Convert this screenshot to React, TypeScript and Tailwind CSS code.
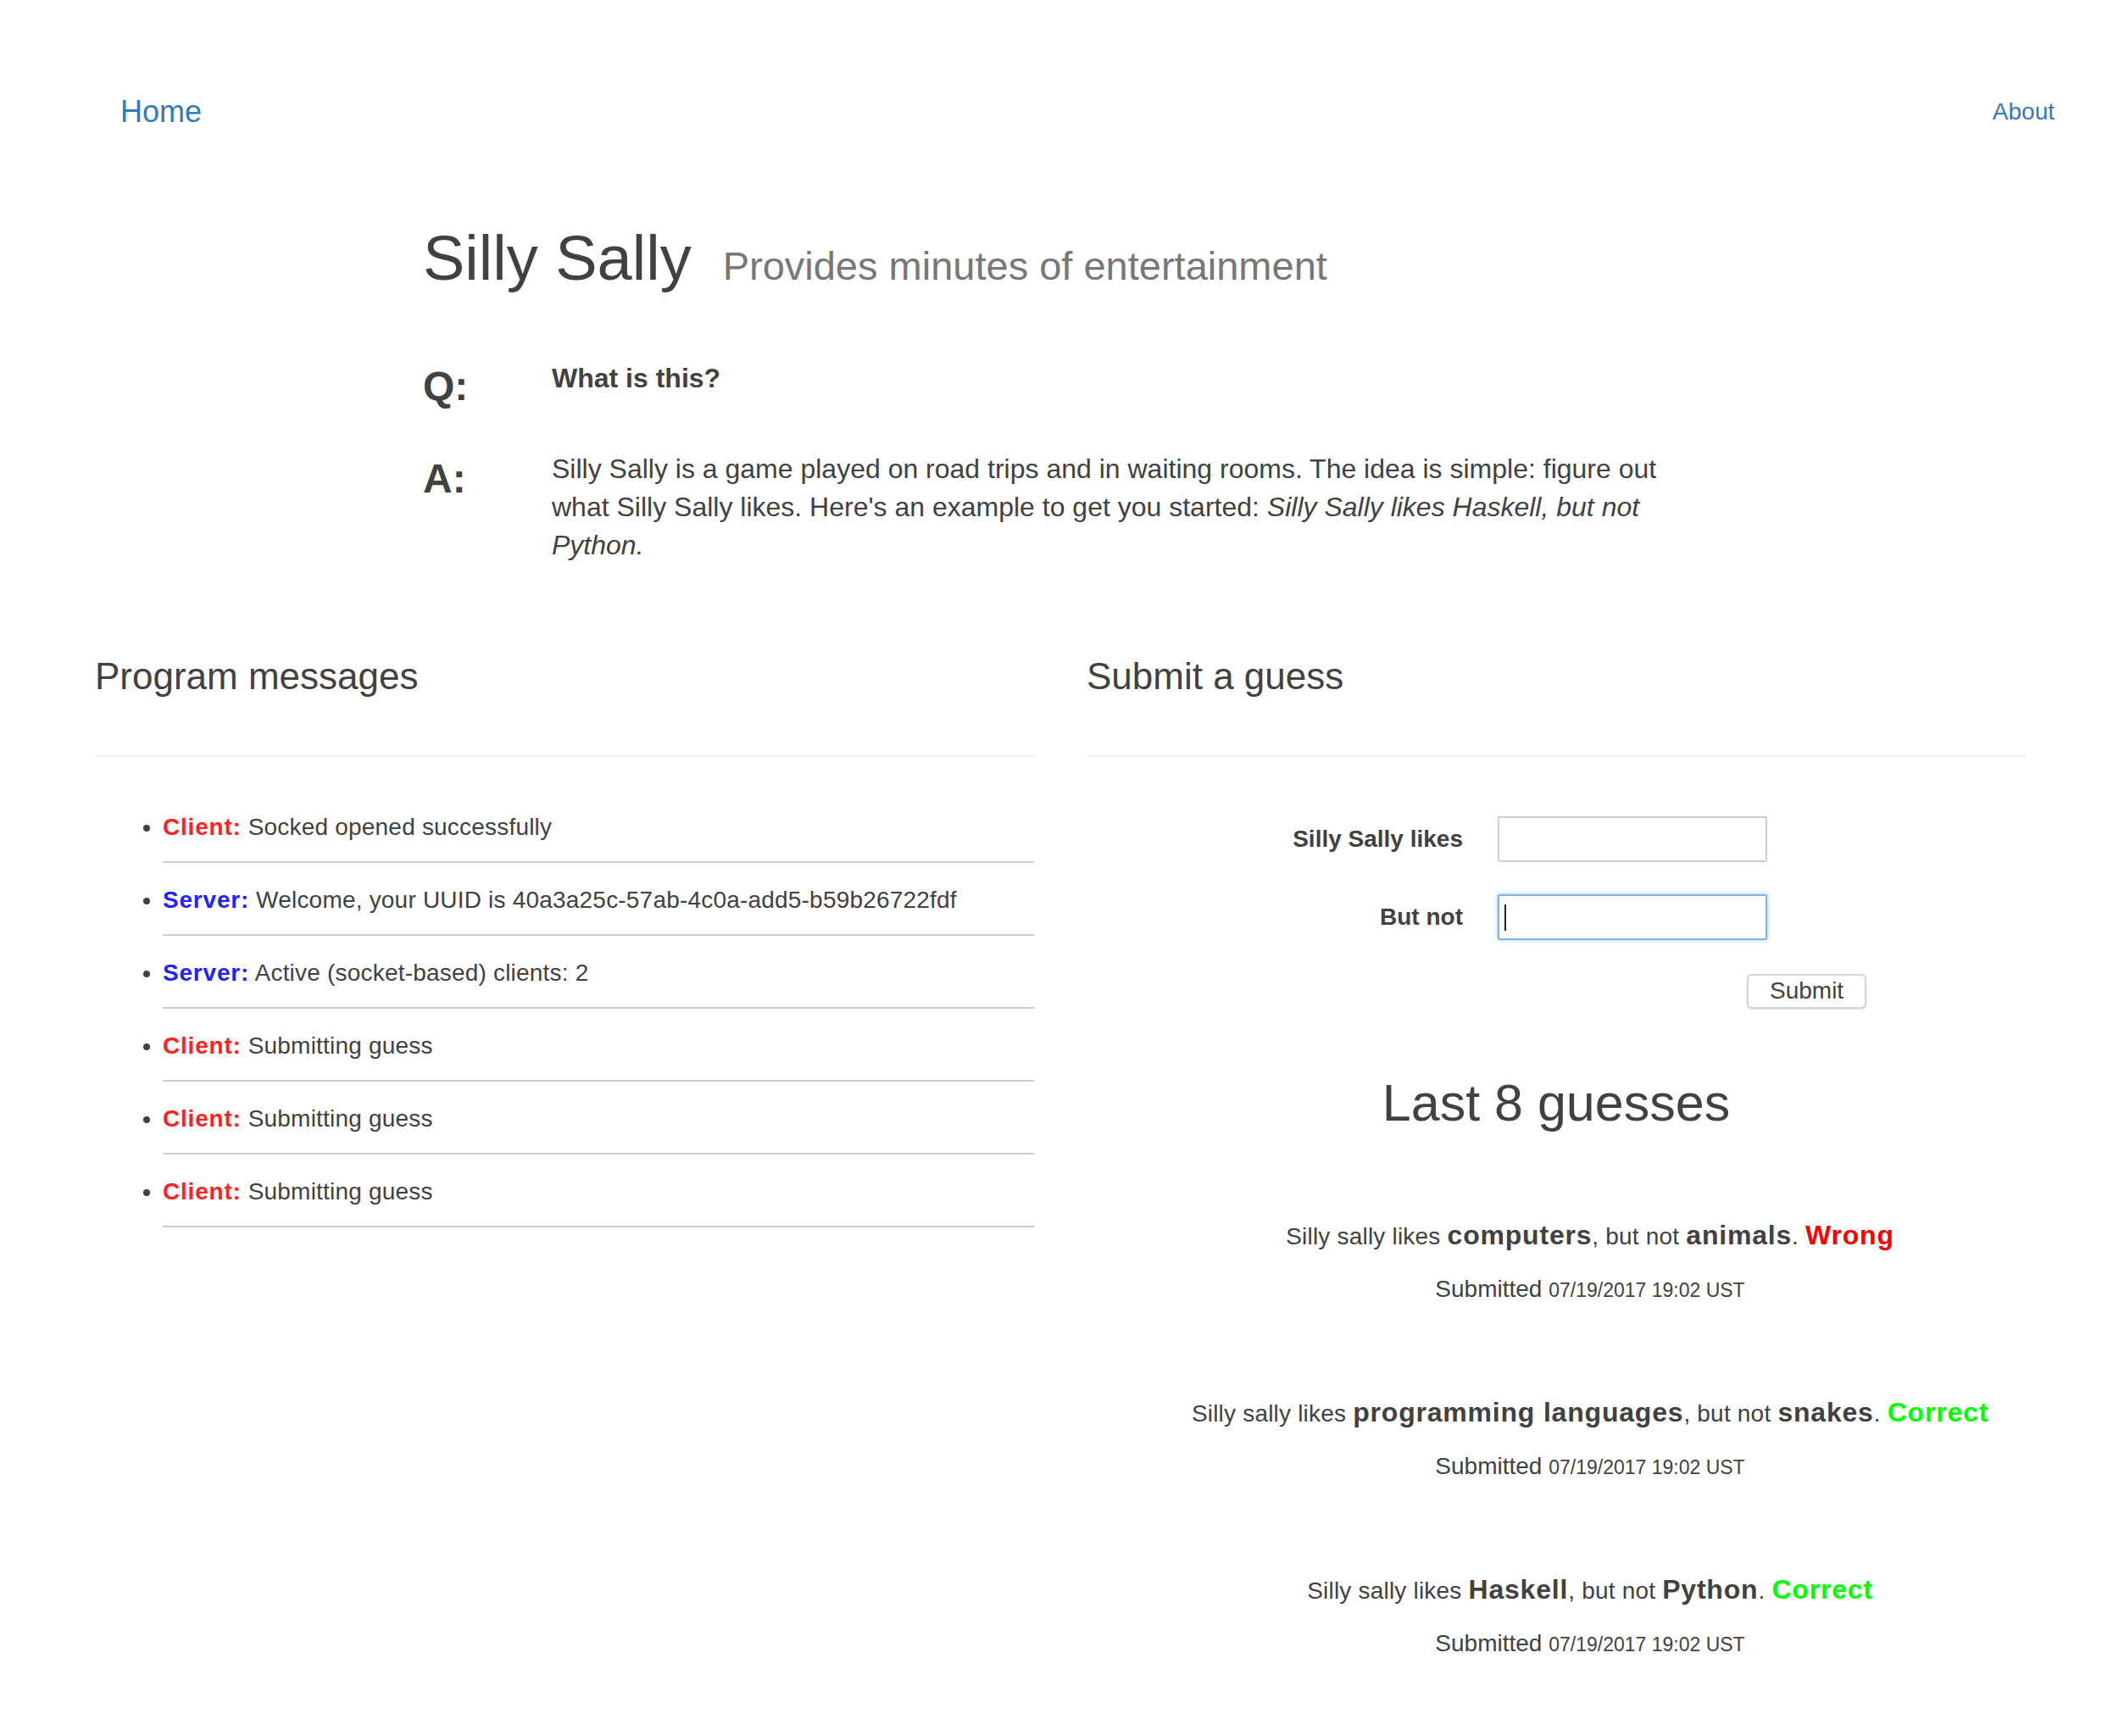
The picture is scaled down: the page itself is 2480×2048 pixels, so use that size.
import React from 'react';

type Message = { from: 'Client' | 'Server'; text: string };

const messages: Message[] = [
  { from: 'Client', text: 'Socked opened successfully' },
  { from: 'Server', text: 'Welcome, your UUID is 40a3a25c-57ab-4c0a-add5-b59b26722fdf' },
  { from: 'Server', text: 'Active (socket-based) clients: 2' },
  { from: 'Client', text: 'Submitting guess' },
  { from: 'Client', text: 'Submitting guess' },
  { from: 'Client', text: 'Submitting guess' },
];

type Guess = { likes: string; not: string; correct: boolean; submitted: string };

const guesses: Guess[] = [
  { likes: 'computers', not: 'animals', correct: false, submitted: '07/19/2017 19:02 UST' },
  { likes: 'programming languages', not: 'snakes', correct: true, submitted: '07/19/2017 19:02 UST' },
  { likes: 'Haskell', not: 'Python', correct: true, submitted: '07/19/2017 19:02 UST' },
];

function SectionHeading({ children }: { children: React.ReactNode }) {
  return (
    <h3 className="mt-[108px] border-b-2 border-[#eee] pb-[69px] text-[44px] leading-[48px] font-normal">
      {children}
    </h3>
  );
}

export default function App() {
  return (
    <div className="min-h-screen bg-white font-['Liberation_Sans',Arial,sans-serif] text-[#414141]">
      <nav className="flex items-start justify-between pt-[112px] pl-[142px] pr-[56px]">
        <a href="#" className="text-[36px] leading-[40px] text-[#337ab7]">
          Home
        </a>
        <a href="#" className="text-[28px] leading-[40px] text-[#337ab7]">
          About
        </a>
      </nav>

      <div className="ml-[499px] mt-[113px]">
        <h1 className="text-[74px] leading-[80px] font-normal">
          <span>Silly Sally</span>
          <small className="ml-[37px] text-[47px] leading-none text-[#777]">Provides minutes of entertainment</small>
        </h1>

        {/* Q and A */}
        <div className="mt-[84px] grid grid-cols-[152px_1fr] items-start">
          <h3 className="text-[48px] leading-[53px] font-bold">Q:</h3>
          <p className="text-[32px] leading-[35px] font-bold">What is this?</p>
        </div>
        <div className="mt-[49px] grid grid-cols-[152px_1fr] items-start">
          <h3 className="mt-[7px] text-[48px] leading-[53px] font-bold">A:</h3>
          <p className="w-[1320px] text-[32px] leading-[45px]">
            Silly Sally is a game played on road trips and in waiting rooms. The idea is simple: figure out what
            Silly Sally likes. Here's an example to get you started: <em>Silly Sally likes Haskell, but not</em>{' '}
            <em>Python.</em>
          </p>
        </div>
      </div>

      <div className="ml-[112px] grid w-[2278px] grid-cols-2 gap-[62px]">
        {/* Program messages */}
        <section>
          <SectionHeading>Program messages</SectionHeading>
          <ul className="mt-[39px] list-disc pl-[80px] text-[28px] leading-[40px] tracking-[0.2px]">
            {messages.map((m, i) => (
              <li key={i} className="border-b-2 border-[#ccc] pt-[24px] pb-[20px]">
                <strong
                  className={
                    m.from === 'Client' ? 'tracking-[0.8px] text-[#ff2222]' : 'tracking-[0.8px] text-[#2222ff]'
                  }
                >
                  {m.from}:
                </strong>{' '}
                {m.text}
              </li>
            ))}
          </ul>
        </section>

        {/* Submit a guess */}
        <section>
          <SectionHeading>Submit a guess</SectionHeading>
          <form className="mt-[70px] text-[28px]" onSubmit={(e) => e.preventDefault()}>
            <div className="flex items-center">
              <label className="w-[444px] text-right font-bold leading-[40px]">Silly Sally likes</label>
              <input
                type="text"
                className="ml-[41px] h-[54px] w-[318px] rounded-[2px] border-2 border-[#ccc] px-[16px] outline-none"
              />
            </div>
            <div className="mt-[38px] flex items-center">
              <label className="w-[444px] text-right font-bold leading-[40px]">But not</label>
              <div className="relative ml-[41px]">
                <input
                  type="text"
                  className="h-[54px] w-[318px] rounded-[2px] border-2 border-[#7fb2ea] px-[16px] shadow-[0_0_5px_rgba(102,175,233,0.7)] outline-none"
                />
                <span className="pointer-events-none absolute top-[12px] left-[8px] h-[31px] w-[2px] bg-[#222]" />
              </div>
            </div>
            <div className="mt-[39px]">
              <button
                type="submit"
                className="ml-[779px] h-[41px] rounded-[6px] border-2 border-[#d4d4d4] bg-white px-[25px] text-[28px] leading-none shadow-[0_1px_2px_rgba(0,0,0,0.15)]"
              >
                Submit
              </button>
            </div>
          </form>

          <h2 className="mt-[78px] text-center text-[61px] leading-[66px] font-normal">Last 8 guesses</h2>

          <ul className="mt-[101px] flex flex-col gap-[102px] pl-[80px] text-center">
            {guesses.map((g, i) => (
              <li key={i}>
                <div className="text-[28px] leading-[45px] tracking-[0.2px]">
                  Silly sally likes <strong className="text-[32px] tracking-[0.8px]">{g.likes}</strong>, but not{' '}
                  <strong className="text-[32px] tracking-[0.8px]">{g.not}</strong>.{' '}
                  {g.correct ? (
                    <strong className="text-[32px] tracking-[0.8px] text-[#00ff00]">Correct</strong>
                  ) : (
                    <strong className="text-[32px] tracking-[0.8px] text-[#ff0000]">Wrong</strong>
                  )}
                </div>
                <div className="mt-[20px] text-[28px] leading-[40px]">
                  Submitted <small className="text-[23px]">{g.submitted}</small>
                </div>
              </li>
            ))}
          </ul>
        </section>
      </div>
    </div>
  );
}
